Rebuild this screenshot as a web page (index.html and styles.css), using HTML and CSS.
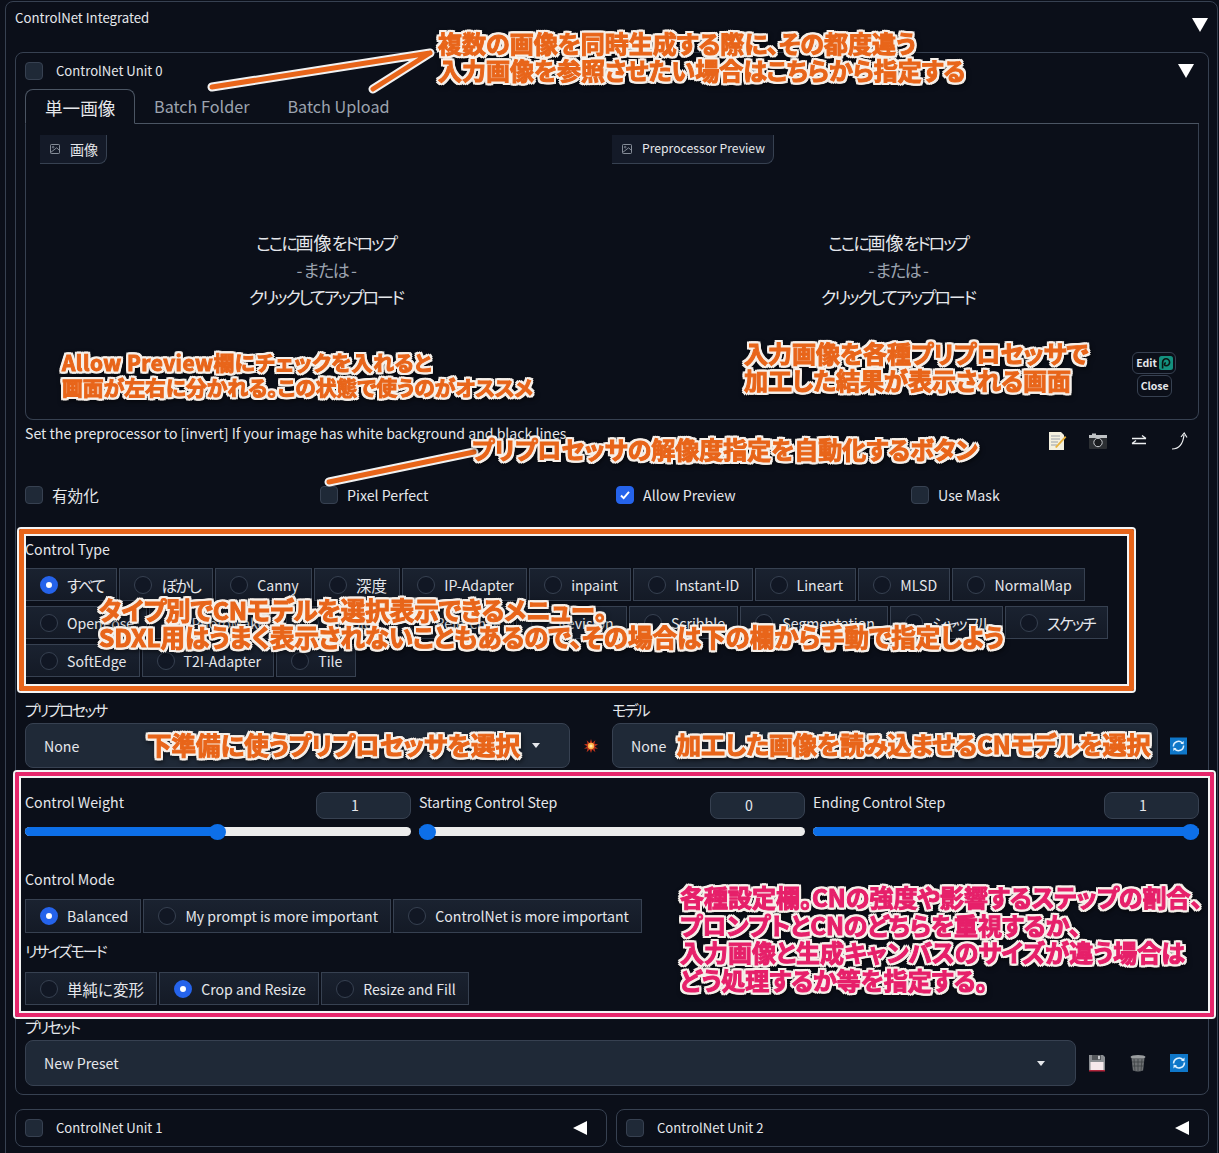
FILE: index.html
```html
<!DOCTYPE html>
<html lang="ja">
<head>
<meta charset="utf-8">
<title>ControlNet Integrated</title>
<link rel="stylesheet" href="styles.css">
</head>
<body>
<svg class="icon-defs" width="0" height="0" aria-hidden="true">
  <symbol id="i-image" viewBox="0 0 12 12"><rect x=".6" y=".6" width="10.8" height="10.8" rx="1" fill="none" stroke="currentColor"/><circle cx="3.8" cy="3.8" r="1" fill="none" stroke="currentColor" stroke-width=".8"/><path d="M1 10 8 4.500l3 3" fill="none" stroke="currentColor"/></symbol>
  <symbol id="i-refresh" viewBox="0 0 18 18"><rect width="18" height="18" fill="#0f77c9"/><path d="M3.600 9.600a5.400 5.400 0 0 1 9.400-3.700" fill="none" stroke="#dff1ff" stroke-width="1.600"/><path d="M14.400 8.400A5.400 5.400 0 0 1 5 12.100" fill="none" stroke="#dff1ff" stroke-width="1.600"/><path d="m14.600 3.600-.2 3.600-3.400-.5zM3.400 14.400l.2-3.600 3.400.5z" fill="#dff1ff"/></symbol>
</svg>

<main class="panel">
  <header class="panel-head">
    <span class="panel-title">ControlNet Integrated</span>
    <span class="tri tri-down"></span>
  </header>

  <section class="unit">
    <div class="unit-head">
      <span class="check"></span>
      <span class="unit-name">ControlNet Unit 0</span>
      <span class="tri tri-down tri-unit"></span>
    </div>

    <nav class="tabs">
      <span class="tab tab-on">単一画像</span>
      <span class="tab">Batch Folder</span>
      <span class="tab">Batch Upload</span>
    </nav>

    <div class="tab-body">
      <div class="drop">
        <span class="img-label"><svg class="img-icon"><use href="#i-image"/></svg>画像</span>
        <div class="drop-text"><span>ここに<b class="kanji">画像</b>をドロップ</span><span class="or">- または -</span><span>クリックしてアップロード</span></div>
      </div>
      <div class="drop">
        <span class="img-label img-label-latin"><svg class="img-icon"><use href="#i-image"/></svg>Preprocessor Preview</span>
        <div class="drop-text"><span>ここに<b class="kanji">画像</b>をドロップ</span><span class="or">- または -</span><span>クリックしてアップロード</span></div>
        <div class="mini-btns">
          <span class="mini-btn">Edit<svg class="pea" viewBox="0 0 14 14"><rect width="14" height="14" rx="2.500" fill="#14917f"/><path d="M3.600 12.500V6.400a3.500 3.500 0 1 1 3.500 3.400 1.500 1.500 0 0 1-.2-3" fill="none" stroke="#0b1512" stroke-width="1.600"/></svg></span>
          <span class="mini-btn">Close</span>
        </div>
      </div>
    </div>

    <div class="hint-row">
      <p class="hint">Set the preprocessor to [invert] If your image has white background and black lines.</p>
      <div class="tools">
        <svg class="tool" viewBox="0 0 20 20"><path d="M2 1h12l3 3v15H2z" fill="#f4f0df"/><path d="M4 5h9M4 8h9M4 11h7M4 14h6" stroke="#9aa0a8"/><path d="m8 16 10-11 1.400 1.200L9.500 17z" fill="#e9b23c"/></svg>
        <svg class="tool" viewBox="0 0 20 20"><rect x="1" y="4" width="18" height="14" rx="1" fill="#2c2f33"/><rect x="1" y="4" width="18" height="3" fill="#bfc2c5"/><rect x="4" y="2.500" width="4" height="2" fill="#bfc2c5"/><circle cx="10" cy="11.500" r="4.200" fill="#191b1e" stroke="#c9ccd0"/></svg>
        <svg class="tool" viewBox="0 0 20 20"><path d="M3 7.500h14M13 4.500l4 3M17 12.500H3M7 9.500l-4 3" fill="none" stroke="#eef0f2" stroke-width="1.300"/></svg>
        <svg class="tool" viewBox="0 0 20 20"><path d="M2 18c7 0 11-5 12-14" fill="none" stroke="#eef0f2" stroke-width="1.200"/><path d="m11 6 3.200-4L17 6.500" fill="none" stroke="#eef0f2" stroke-width="1.200"/></svg>
      </div>
    </div>

    <div class="checks">
      <label class="chk"><span class="check"></span><span class="chk-jp">有効化</span></label>
      <label class="chk"><span class="check"></span>Pixel Perfect</label>
      <label class="chk"><span class="check check-on"><svg viewBox="0 0 18 18"><path d="m4.500 9.500 3 3 6-7" fill="none" stroke="#fff" stroke-width="2.200"/></svg></span>Allow Preview</label>
      <label class="chk"><span class="check"></span>Use Mask</label>
    </div>

    <div class="field control-type">
      <div class="lbl">Control Type</div>
      <div class="radios">
        <label class="radio"><span class="dot dot-on"></span><span class="jp">すべて</span></label>
        <label class="radio"><span class="dot"></span><span class="jp">ぼかし</span></label>
        <label class="radio"><span class="dot"></span>Canny</label>
        <label class="radio"><span class="dot"></span><span class="kj">深度</span></label>
        <label class="radio"><span class="dot"></span>IP-Adapter</label>
        <label class="radio"><span class="dot"></span>inpaint</label>
        <label class="radio"><span class="dot"></span>Instant-ID</label>
        <label class="radio"><span class="dot"></span>Lineart</label>
        <label class="radio"><span class="dot"></span>MLSD</label>
        <label class="radio"><span class="dot"></span>NormalMap</label>
        <label class="radio"><span class="dot"></span>OpenPose</label>
        <label class="radio"><span class="dot"></span>PhotoMaker</label>
        <label class="radio"><span class="dot"></span>Recolor</label>
        <label class="radio"><span class="dot"></span>Reference</label>
        <label class="radio"><span class="dot"></span>Revision</label>
        <label class="radio"><span class="dot"></span>Scribble</label>
        <label class="radio"><span class="dot"></span>Segmentation</label>
        <label class="radio"><span class="dot"></span><span class="jp">シャッフル</span></label>
        <label class="radio"><span class="dot"></span><span class="jp">スケッチ</span></label>
        <label class="radio"><span class="dot"></span>SoftEdge</label>
        <label class="radio"><span class="dot"></span>T2I-Adapter</label>
        <label class="radio"><span class="dot"></span>Tile</label>
      </div>
    </div>

    <div class="selects">
      <div class="select-col">
        <div class="lbl lbl-jp">プリプロセッサ</div>
        <div class="select-line">
          <div class="select"><span>None</span><span class="caret"></span></div>
          <svg class="side-icon" viewBox="0 0 16 16"><path d="M8 0l1.500 4.500L13 1.500l-1 4L16 6l-3.500 2.500L16 11l-4-.2L13 15l-3.500-3L8 16l-1.500-4L3 15l1-4.200L0 11l3.500-2.500L0 6l4-.5-1-4 3.500 3z" fill="#b8321c"/><circle cx="8" cy="8" r="3.600" fill="#ffb347"/><circle cx="8" cy="8" r="1.800" fill="#ffe9b0"/></svg>
        </div>
      </div>
      <div class="select-col">
        <div class="lbl lbl-jp">モデル</div>
        <div class="select-line">
          <div class="select"><span>None</span></div>
          <svg class="side-refresh"><use href="#i-refresh"/></svg>
        </div>
      </div>
    </div>

    <div class="sliders">
      <div class="slider">
        <div class="slider-top"><span class="lbl">Control Weight</span><span class="num">1</span></div>
        <div class="track"><div class="fill fill-half"></div><span class="thumb"></span></div>
      </div>
      <div class="slider">
        <div class="slider-top"><span class="lbl">Starting Control Step</span><span class="num">0</span></div>
        <div class="track"><div class="fill fill-none"></div><span class="thumb"></span></div>
      </div>
      <div class="slider">
        <div class="slider-top"><span class="lbl">Ending Control Step</span><span class="num">1</span></div>
        <div class="track"><div class="fill fill-full"></div><span class="thumb"></span></div>
      </div>
    </div>

    <div class="field control-mode">
      <div class="lbl">Control Mode</div>
      <div class="radios">
        <label class="radio radio-tall"><span class="dot dot-on"></span>Balanced</label>
        <label class="radio radio-tall"><span class="dot"></span>My prompt is more important</label>
        <label class="radio radio-tall"><span class="dot"></span>ControlNet is more important</label>
      </div>
    </div>

    <div class="field resize-mode">
      <div class="lbl lbl-jp">リサイズモード</div>
      <div class="radios">
        <label class="radio"><span class="dot"></span><span class="kj">単純に変形</span></label>
        <label class="radio"><span class="dot dot-on"></span>Crop and Resize</label>
        <label class="radio"><span class="dot"></span>Resize and Fill</label>
      </div>
    </div>

    <div class="field preset">
      <div class="lbl lbl-jp">プリセット</div>
      <div class="preset-line">
        <div class="select select-preset"><span>New Preset</span><span class="caret"></span></div>
        <div class="preset-tools">
          <svg class="ptool" viewBox="0 0 18 18"><path d="M1 1h14l2 2v14H1z" fill="#8b8e92"/><rect x="4" y="1" width="9" height="5" fill="#55585c"/><rect x="10" y="1.800" width="2" height="3.400" fill="#c9cbce"/><rect x="2.500" y="8" width="13" height="8" fill="#f6e9ec"/><rect x="1" y="16" width="16" height="1.500" fill="#b3263c"/></svg>
          <svg class="ptool" viewBox="0 0 18 18"><ellipse cx="9" cy="3" rx="7.500" ry="2" fill="#9a9d9f"/><path d="M2.500 4h13l-1.400 12.500Q9 18.500 3.900 16.500z" fill="#6d7073"/><path d="M5 5l1 12M9 5v12.500M13 5l-1 12M3 8h12M3.500 12h11" stroke="#3e4144" stroke-width=".8"/></svg>
          <svg class="ptool"><use href="#i-refresh"/></svg>
        </div>
      </div>
    </div>
  </section>

  <div class="unit-row">
    <div class="unit-closed"><span class="check"></span><span class="unit-name">ControlNet Unit 1</span><span class="tri tri-left"></span></div>
    <div class="unit-closed"><span class="check"></span><span class="unit-name">ControlNet Unit 2</span><span class="tri tri-left"></span></div>
  </div>
</main>

<svg class="arrows" viewBox="0 0 1219 1153" aria-hidden="true">
  <g class="arrow-w">
    <path d="M212 87 430 53M373 89l57-36"/>
    <path d="M329 482 474 452"/>
  </g>
  <g class="arrow-o">
    <path d="M212 87 430 53M373 89l57-36"/>
    <path d="M329 482 474 452"/>
  </g>
</svg>

<div class="frame frame-orange"></div>
<div class="frame frame-pink"></div>

<div class="note note-a">複数の画像を同時生成する際に、その都度違う<br>入力画像を参照させたい場合はこちらから指定する</div>
<div class="note note-b"><span class="note-b1">Allow Preview欄にチェックを入れると</span><br>画面が左右に分かれる。この状態で使うのがオススメ</div>
<div class="note note-c">入力画像を各種プリプロセッサで<br>加工した結果が表示される画面</div>
<div class="note note-d">プリプロセッサの解像度指定を自動化するボタン</div>
<div class="note note-e">タイプ別でCNモデルを選択表示できるメニュー。<br>SDXL用はうまく表示されないこともあるので、その場合は下の欄から手動で指定しよう</div>
<div class="note note-f">下準備に使うプリプロセッサを選択</div>
<div class="note note-g">加工した画像を読み込ませるCNモデルを選択</div>
<div class="note note-pink note-h">各種設定欄。CNの強度や影響するステップの割合、<br>プロンプトとCNのどちらを重視するか、<br>入力画像と生成キャンバスのサイズが違う場合は<br>どう処理するか等を指定する。</div>
</body>
</html>
```
FILE: styles.css
```css
* { box-sizing: border-box; }
html, body { margin: 0; padding: 0; }
body {
  position: relative;
  width: 1219px;
  height: 1153px;
  overflow: hidden;
  background: #0b0f19;
  color: #e5e7eb;
  font-family: "Noto Sans CJK JP", "Noto Sans", sans-serif;
  font-feature-settings: "palt";
  font-size: 14.2px;
  line-height: 1.3;
}
.icon-defs { position: absolute; }

.panel {
  margin: 1px 0 0 5px;
  width: 1213px;
  height: 1170px;
  padding: 0 9px 0 9px;
  border: 1px solid #374151;
  border-radius: 8px;
}
.panel-head {
  display: flex;
  justify-content: space-between;
  height: 50px;
  padding-top: 7px;
}
.panel-title { font-size: 13.2px; }
.tri { display: block; width: 0; height: 0; }
.tri-down {
  margin: 9px 0 0;
  border-left: 8.5px solid transparent;
  border-right: 8.5px solid transparent;
  border-top: 14px solid #fff;
}
.tri-unit { margin: 0 0 0 auto; }
.tri-left {
  margin-left: auto;
  border-top: 7.5px solid transparent;
  border-bottom: 7.5px solid transparent;
  border-right: 14px solid #fff;
}

.unit {
  width: 1194px;
  height: 1043px;
  padding: 0 9px;
  border: 1px solid #374151;
  border-radius: 8px;
}
.unit-head {
  display: flex;
  align-items: center;
  height: 36px;
  padding-right: 5px;
}
.unit-name { margin-left: 13px; font-size: 13.1px; }
.check {
  flex: none;
  display: block;
  width: 18px;
  height: 18px;
  background: #1f2937;
  border: 1px solid #374151;
  border-radius: 4px;
}
.check-on { background: #2563eb; border-color: #2563eb; }
.check-on svg { display: block; width: 16px; height: 16px; }

.tabs {
  display: flex;
  height: 35px;
  border-bottom: 1px solid #4b5563;
}
.tab {
  padding: 0 19px;
  height: 35px;
  line-height: 35px;
  font-size: 16.2px;
  white-space: nowrap;
  color: #9ca3af;
}
.tab-on {
  width: 110px;
  font-size: 17.6px;
  color: #e5e7eb;
  background: #0b0f19;
  border: 1px solid #4b5563;
  border-bottom-color: #0b0f19;
  border-radius: 8px 8px 0 0;
}

.tab-body {
  display: grid;
  grid-template-columns: 1fr 1fr;
  height: 296px;
  padding: 11px 14px 0;
  border: 1px solid #374151;
  border-top: 0;
  border-radius: 0 0 8px 8px;
}
.drop { position: relative; }
.img-label {
  display: inline-flex;
  align-items: center;
  height: 29px;
  padding: 0 8px 0 10px;
  font-size: 14px;
  background: #141a28;
  border-right: 1px solid #374151;
  border-bottom: 1px solid #374151;
  border-radius: 0 0 8px 0;
}
.img-label-latin { font-size: 12.2px; }
.img-icon { width: 10px; height: 10px; margin-right: 10px; color: #9ca3af; }
.drop-text {
  display: flex;
  flex-direction: column;
  align-items: center;
  margin-top: 65px;
  font-size: 17px;
  line-height: 27px;
  letter-spacing: -2.1px;
}
.kanji { font-weight: 400; font-size: 18px; letter-spacing: 0; }
.or { color: #9ca3af; letter-spacing: -1.3px; }
.mini-btns {
  position: absolute;
  right: 8px;
  top: 217px;
  display: flex;
  flex-direction: column;
  align-items: center;
  gap: 1px;
}
.mini-btn {
  display: flex;
  align-items: center;
  height: 22px;
  padding: 0 2px 0 3px;
  font-size: 10.5px;
  font-weight: 700;
  border: 1px solid #374151;
  border-radius: 6px;
}
.pea { width: 14px; height: 14px; margin-left: 2px; }

.hint-row { display: flex; justify-content: space-between; height: 55px; }
.hint { margin: 4px 0 0; font-size: 14.1px; }
.tools {
  display: flex;
  gap: 21px;
  padding: 11px 9px 0 0;
}
.tool { width: 20px; height: 20px; }

.checks {
  display: grid;
  grid-template-columns: 295px 296px 295px 1fr;
  height: 40px;
  align-items: center;
}
.chk { display: flex; align-items: center; gap: 9px; }
.chk-jp { font-size: 15.6px; }

.lbl { font-size: 14.2px; }
.lbl-jp { font-size: 15px; letter-spacing: -1.9px; }
.control-type { padding-top: 25px; }
.radios { display: flex; flex-wrap: wrap; gap: 5px 2px; margin-top: 10px; }
.radio {
  display: flex;
  align-items: center;
  gap: 9px;
  height: 33px;
  padding: 0 12.3px 0 14px;
  font-size: 14.1px;
  background: linear-gradient(#1a2230, #141a26);
  border: 1px solid #374151;
  white-space: nowrap;
}
.jp { font-size: 15.5px; letter-spacing: -1.8px; }
.kj { font-size: 15.5px; }
.radio-tall { height: 34px; }
.dot {
  flex: none;
  display: block;
  width: 18px;
  height: 18px;
  border: 1px solid #374151;
  border-radius: 50%;
  background: #111724;
}
.dot-on {
  border: 6px solid #2563eb;
  background: #fff;
}

.selects {
  display: grid;
  grid-template-columns: 573px 1fr;
  column-gap: 14px;
  margin-top: 23px;
}
.select-col .lbl { height: 23px; }
.select-line { display: flex; align-items: center; }
.select {
  flex: 1;
  display: flex;
  align-items: center;
  justify-content: space-between;
  height: 45px;
  padding: 0 29px 0 18px;
  background: #1f2937;
  border: 1px solid #374151;
  border-radius: 8px;
}
.caret {
  width: 0;
  height: 0;
  border-left: 4px solid transparent;
  border-right: 4px solid transparent;
  border-top: 5px solid #e5e7eb;
}
.side-icon { flex: none; width: 14px; height: 16px; margin-left: 14px; }
.side-refresh { flex: none; width: 17px; height: 18px; margin: 0 12px; }

.sliders {
  display: grid;
  grid-template-columns: repeat(3, 1fr);
  column-gap: 8px;
  margin-top: 23px;
}
.slider-top { display: flex; justify-content: space-between; height: 36px; }
.slider-top .lbl { padding-top: 2px; }
.num {
  width: 95px;
  height: 27px;
  margin-top: 1px;
  line-height: 25px;
  text-align: center;
  padding-right: 17px;
  background: #1f2937;
  border: 1px solid #374151;
  border-radius: 8px;
}
.track {
  display: flex;
  align-items: center;
  height: 9px;
  background: #ececec;
  border-radius: 5px;
}
.fill { height: 9px; background: #0d6fe8; border-radius: 5px 0 0 5px; }
.fill-half { width: 50%; }
.fill-none { width: 9px; }
.fill-full { width: 100%; border-radius: 5px; }
.thumb {
  flex: none;
  display: block;
  width: 17px;
  height: 16px;
  margin-left: -9px;
  border-radius: 50%;
  background: #0d6fe8;
}
.fill-full + .thumb { margin-left: -17px; }

.control-mode { margin-top: 34px; }
.control-mode .radios { margin-top: 10px; }
.resize-mode { margin-top: 8px; }
.resize-mode .radios { margin-top: 12px; }
.preset { margin-top: 12px; }
.preset .lbl { height: 21px; }
.preset-line { display: flex; align-items: center; margin-top: 2px; }
.select-preset { height: 46px; flex: none; width: 1051px; padding-right: 30px; }
.preset-tools { display: flex; gap: 23px; margin-left: 12px; }
.ptool { width: 18px; height: 18px; }

.unit-row {
  display: grid;
  grid-template-columns: 592px 593px;
  column-gap: 9px;
  margin-top: 14px;
}
.unit-closed {
  display: flex;
  align-items: center;
  height: 38px;
  padding: 0 19px 0 9px;
  border: 1px solid #374151;
  border-radius: 8px;
}

/* annotation layer */
.arrows { position: absolute; inset: 0; width: 1219px; height: 1153px; pointer-events: none; }
.arrows path { fill: none; stroke-linecap: round; stroke-linejoin: round; }
.arrow-w path { stroke: #f2f2f2; stroke-width: 9px; }
.arrow-o path { stroke: #e8651a; stroke-width: 5px; }

.frame { position: absolute; pointer-events: none; border-radius: 2px; }
.frame-orange {
  left: 19px; top: 529px; width: 1115px; height: 162px;
  border: 5px solid #e8651a;
  box-shadow: 0 0 0 2px #f4f4f4, inset 0 0 0 2px #f4f4f4;
}
.frame-pink {
  left: 15px; top: 772px; width: 1199px; height: 245px;
  border: 4px solid #e6266b;
  box-shadow: 0 0 0 2px #f4f4f4, inset 0 0 0 2px #f4f4f4;
}

.note {
  position: absolute;
  white-space: nowrap;
  font-weight: 700;
  font-size: 24px;
  line-height: 27px;
  color: #e8651a;
  -webkit-text-stroke: 1px #e8651a;
  filter: drop-shadow(2px 0 0 #f6f0ea) drop-shadow(-2px 0 0 #f6f0ea) drop-shadow(0 2px 0 #f6f0ea) drop-shadow(0 -2px 0 #f6f0ea) drop-shadow(1px 2px 2px rgba(0, 0, 0, .5));
}
.note-pink {
  color: #e6206a;
  -webkit-text-stroke-color: #e6206a;
  line-height: 27.7px;
}
.note-a { left: 438px; top: 29px; }
.note-b { left: 62px; top: 350px; line-height: 25px; font-size: 20.8px; }
.note-b1 { letter-spacing: .5px; }
.note-c { left: 744px; top: 339px; }
.note-d { left: 472px; top: 435px; }
.note-e { left: 99px; top: 597px; line-height: 26.5px; font-size: 24.5px; }
.note-f { left: 147px; top: 731px; font-size: 24.5px; }
.note-g { left: 677px; top: 730px; }
.note-h { left: 680px; top: 883px; }
```
